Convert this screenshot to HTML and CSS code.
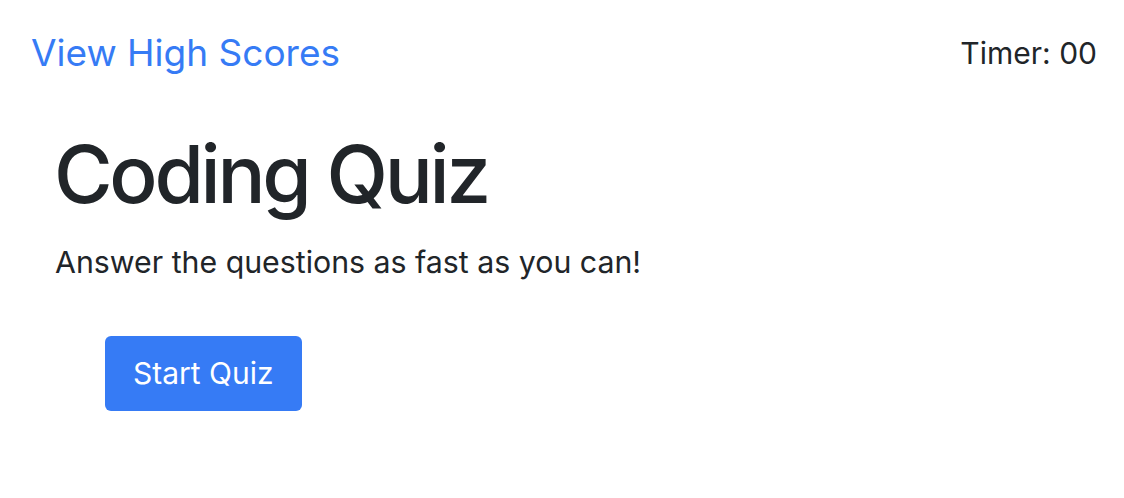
FILE: index.html
```html
<!DOCTYPE html>
<html lang="en">
<head>
<meta charset="utf-8">
<title>Coding Quiz</title>
<link rel="stylesheet" href="styles.css">
</head>
<body>
<header class="top-bar">
  <a class="scores-link" href="#">View High Scores</a>
  <div class="timer">Timer: <span>00</span></div>
</header>
<main class="intro">
  <h1 class="title">Coding Quiz</h1>
  <p class="lead">Answer the questions as fast as you can!</p>
  <div class="actions">
    <button class="start-btn" type="button">Start Quiz</button>
  </div>
</main>
</body>
</html>
```

FILE: styles.css
```css
* { box-sizing: border-box; }
html, body { margin: 0; padding: 0; background: #fff; }
body {
  font-family: Inter, "Noto Sans", "Liberation Sans", sans-serif;
  color: #212529;
}
.top-bar {
  display: flex;
  justify-content: space-between;
  align-items: flex-start;
  padding: 27px 27px 0 31px;
}
.scores-link {
  color: #367bf5;
  text-decoration: none;
  font-size: 37px;
  line-height: 52px;
}
.timer {
  font-size: 30px;
  line-height: 52px;
}
.intro {
  padding: 45px 56px 0 55px;
}
.title {
  margin: 0 0 0 -1px;
  font-size: 80px;
  font-weight: 500;
  line-height: 100px;
  letter-spacing: -3.3px;
}
.lead {
  margin: 16px 0 0;
  font-size: 30.3px;
  line-height: 44px;
}
.actions {
  padding: 52px 0 0 50px;
}
.start-btn {
  font-family: inherit;
  font-size: 30px;
  line-height: 45px;
  padding: 15px 28px;
  background: #367bf5;
  color: #fff;
  border: 0;
  border-radius: 6px;
}
```
